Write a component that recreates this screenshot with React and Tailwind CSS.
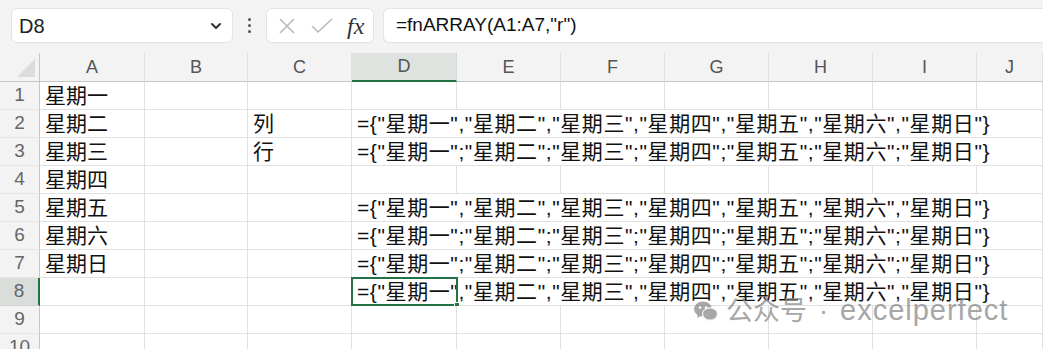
import React from 'react';

const cols = ['A', 'B', 'C', 'D', 'E', 'F', 'G', 'H', 'I', 'J'];
const days = ['星期一', '星期二', '星期三', '星期四', '星期五', '星期六', '星期日'];

const rowSep = '={"' + days.join('","') + '"}';
const colSep = '={"' + days.join('";"') + '"}';

// 每行：A 列、C 列、D 列溢出文本
const rows = [
  { a: '星期一' },
  { a: '星期二', c: '列', d: rowSep },
  { a: '星期三', c: '行', d: colSep },
  { a: '星期四' },
  { a: '星期五', d: rowSep },
  { a: '星期六', d: colSep },
  { a: '星期日', d: colSep },
  { d: rowSep, selected: true },
  {},
  {},
];

const font = { fontFamily: '"Liberation Sans", "Noto Sans CJK SC", sans-serif' };

function Cell({ children, className = '' }) {
  return (
    <div className={`h-[28px] border-r border-b border-[#e1e1e1] bg-white flex items-center pl-[5px] text-[21px] text-[#111] whitespace-nowrap overflow-visible ${className}`}>
      {children}
    </div>
  );
}

function Row({ n, row }) {
  return (
    <div className="grid grid-cols-[40px_105px_103px_104px_105px_104px_104px_104px_104px_104px_1fr] relative">
      <div className={`h-[28px] flex items-center justify-center text-[19px] text-[#666] border-b ${row.selected ? 'bg-[#d9dedb] border-r-2 border-r-[#217346] border-b-[#d0d0d0]' : 'bg-[#f3f3f3] border-r border-r-[#c6c6c6] border-b-[#e6e6e6]'}`}>
        {n}
      </div>
      <Cell>{row.a}</Cell>
      <Cell />
      <Cell>{row.c}</Cell>
      {row.d ? (
        <Cell className="col-span-7 pl-[4px] tracking-[0.6px]">{row.d}</Cell>
      ) : (
        <>
          <Cell />
          <Cell />
          <Cell />
          <Cell />
          <Cell />
          <Cell />
          <Cell />
        </>
      )}
      {row.selected && (
        <div className="absolute left-[351px] top-[-1px] w-[107px] h-[29px] border-2 border-[#217346] pointer-events-none">
          <div className="absolute right-[-4px] bottom-[-4px] w-[6px] h-[6px] bg-[#217346] border border-white" />
        </div>
      )}
    </div>
  );
}

export default function App() {
  return (
    <div className="w-[1043px] h-[349px] overflow-hidden bg-[#f3f3f3] relative" style={font}>
      {/* 编辑栏 */}
      <div className="h-[53px] flex items-start pt-[8px] pl-[11px] gap-0">
        <div className="w-[222px] h-[35px] bg-white rounded-[6px] border border-[#e3e3e3] flex items-center justify-between pl-[7px] pr-[9px]">
          <span className="text-[20px] text-[#222]">D8</span>
          <svg width="14" height="14" viewBox="0 0 14 14" fill="none" stroke="#333" strokeWidth="2" strokeLinecap="round" strokeLinejoin="round">
            <path d="M3 5l4 4 4-4" />
          </svg>
        </div>
        <div className="w-[33px] h-[35px] flex flex-col items-center justify-center gap-[3px]">
          <div className="w-[3px] h-[3px] rounded-full bg-[#555]" />
          <div className="w-[3px] h-[3px] rounded-full bg-[#555]" />
          <div className="w-[3px] h-[3px] rounded-full bg-[#555]" />
        </div>
        <div className="w-[108px] h-[35px] bg-white rounded-[6px] border border-[#e3e3e3] flex items-center pl-[10px] gap-[13px]">
          <svg width="20" height="20" viewBox="0 0 20 20" fill="none" stroke="#b9b9b9" strokeWidth="1.6">
            <path d="M3 3l14 14M17 3L3 17" />
          </svg>
          <svg width="24" height="20" viewBox="0 0 24 20" fill="none" stroke="#b9b9b9" strokeWidth="1.6">
            <path d="M2 10l6 6L22 3" />
          </svg>
          <span className="text-[24px] italic text-[#333] leading-none" style={{ fontFamily: '"Liberation Serif", serif' }}>fx</span>
        </div>
        <div className="flex-1 ml-[9px] h-[35px] bg-white rounded-l-[6px] border border-r-0 border-[#e3e3e3] flex items-center pl-[12px]">
          <span className="text-[19px] text-[#111]">=fnARRAY(A1:A7,"r")</span>
        </div>
      </div>

      {/* 列标题 */}
      <div className="grid grid-cols-[40px_105px_103px_104px_105px_104px_104px_104px_104px_104px_1fr] h-[29px]">
        <div className="bg-[#f3f3f3] border-r border-b border-[#c6c6c6] relative overflow-hidden">
          <div className="absolute right-[4px] bottom-[4px] w-0 h-0 border-l-[18px] border-l-transparent border-b-[18px] border-b-[#dcdcdc]" />
        </div>
        {cols.map((c) => (
          <div
            key={c}
            className={`flex items-center justify-center text-[18px] text-[#555] border-r ${c === 'D' ? 'bg-[#dfe3e0] border-b-2 border-b-[#217346] border-r-[#d6d6d6]' : 'bg-[#f3f3f3] border-b border-b-[#c6c6c6] border-r-[#e1e1e1]'}`}
          >
            {c}
          </div>
        ))}
      </div>

      {/* 表格行 */}
      {rows.map((row, i) => (
        <Row key={i} n={i + 1} row={row} />
      ))}

      {/* 水印 */}
      <div className="absolute left-[694px] top-[289px] flex items-center gap-[8px] text-[#8a8a8a] opacity-75 pointer-events-none whitespace-nowrap">
        <svg width="24" height="22" viewBox="0 0 24 22" fill="#8a8a8a">
          <ellipse cx="9" cy="9" rx="9" ry="7.5" />
          <path d="M4 14l-1 4 4-2z" />
          <ellipse cx="16" cy="14" rx="7.5" ry="6.2" stroke="#f3f3f3" strokeWidth="1.2" />
          <circle cx="6" cy="7.5" r="1.2" fill="#fff" />
          <circle cx="12" cy="7.5" r="1.2" fill="#fff" />
        </svg>
        <span className="text-[27px]">公众号</span>
        <span className="text-[27px] mx-[4px]">·</span>
        <span className="text-[29px] tracking-[1px]">excelperfect</span>
      </div>
    </div>
  );
}
